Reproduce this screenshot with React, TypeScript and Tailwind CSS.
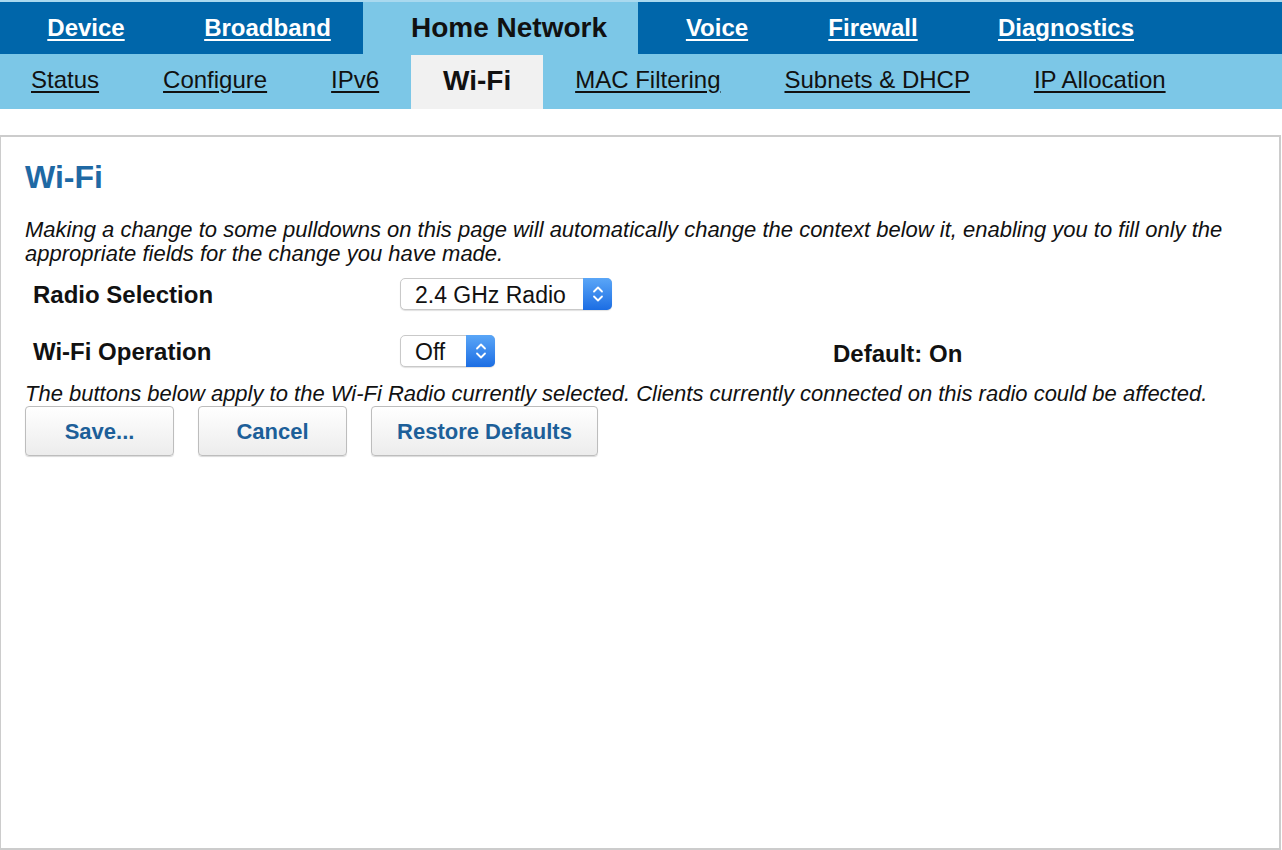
import React from "react";

const font = { fontFamily: '"Liberation Sans", Arial, Helvetica, sans-serif' };

function Chevrons() {
  return (
    <svg width="12" height="20" viewBox="0 0 12 20" fill="none" stroke="white" strokeWidth="1.8" strokeLinecap="round" strokeLinejoin="round">
      <path d="M2 7.5 L6 3.5 L10 7.5" />
      <path d="M2 12.5 L6 16.5 L10 12.5" />
    </svg>
  );
}

function Select({ value, width }: { value: string; width: string }) {
  return (
    <div className={`flex h-[32px] items-stretch rounded-[5px] border border-[#c9c9c9] bg-white shadow-[0_1px_1px_rgba(0,0,0,0.12)] ${width}`}>
      <div className="flex flex-1 items-center pl-[14px] pt-[2px] text-[23px] text-[#111]">{value}</div>
      <div className="-my-px -mr-px flex w-[29px] items-center justify-center rounded-r-[5px] bg-gradient-to-b from-[#5aa6f7] to-[#1b6de3]">
        <Chevrons />
      </div>
    </div>
  );
}

function Btn({ label, width }: { label: string; width: string }) {
  return (
    <button className={`h-[50px] ${width} rounded-[4px] border border-[#bdbdbd] bg-gradient-to-b from-white to-[#ececec] text-[22px] font-bold text-[#1d5f99] shadow-[0_1px_1px_rgba(0,0,0,0.15)]`}>
      {label}
    </button>
  );
}

export default function App() {
  const top = [
    { t: "Device", w: "w-[172px]" },
    { t: "Broadband", w: "w-[191px]" },
  ];
  const top2 = [
    { t: "Voice", w: "w-[158px]" },
    { t: "Firewall", w: "w-[154px]" },
    { t: "Diagnostics", w: "w-[232px]" },
  ];
  const sub1 = ["Status", "Configure", "IPv6"];
  const sub2 = ["MAC Filtering", "Subnets & DHCP", "IP Allocation"];
  return (
    <div className="h-[850px] w-[1282px] overflow-hidden bg-white" style={font}>
      <div className="h-[2px] bg-[#a9d9ef]" />
      <div className="flex h-[52px] bg-[#0066aa]">
        {top.map((i) => (
          <div key={i.t} className={`flex ${i.w} items-center justify-center`}>
            <a className="text-[24px] font-bold text-white underline decoration-[2px] underline-offset-[3px]">{i.t}</a>
          </div>
        ))}
        <div className="flex w-[275px] items-center bg-[#7cc7e7] pl-[48px] text-[28px] font-bold text-[#111]">Home Network</div>
        {top2.map((i) => (
          <div key={i.t} className={`flex ${i.w} items-center justify-center`}>
            <a className="text-[24px] font-bold text-white underline decoration-[2px] underline-offset-[3px]">{i.t}</a>
          </div>
        ))}
      </div>
      <div className="flex h-[55px] items-stretch bg-[#7cc7e7]">
        <div className="flex items-center pb-[4px]">
          {sub1.map((s, idx) => (
            <a key={s} className={`${idx === 0 ? "pl-[31px]" : "pl-[32px]"} pr-[32px] text-[24px] text-[#111] underline underline-offset-[3px]`}>{s}</a>
          ))}
        </div>
        <div className="mt-px flex w-[132px] items-center justify-center bg-[#f1f1f1] pb-[2px] text-[28px] font-bold text-[#111]">Wi-Fi</div>
        <div className="flex items-center pb-[4px]">
          {sub2.map((s) => (
            <a key={s} className="px-[32px] text-[24px] text-[#111] underline underline-offset-[3px]">{s}</a>
          ))}
        </div>
      </div>
      <div className="h-[26px]" />
      <div className="h-[716px] w-[1281px] border-l border-r-2 border-t-2 border-b-[3px] border-[#cccccc] pl-[24px] pt-[22px]">
        <h1 className="text-[32px] font-bold leading-[36px] text-[#1f69a4]">Wi-Fi</h1>
        <p className="mt-[23px] pr-[40px] text-[22px] italic leading-[24px] text-[#111]">
          Making a change to some pulldowns on this page will automatically change the context below it, enabling you to fill only the appropriate fields for the change you have made.
        </p>
        <div className="mt-[12px] flex h-[32px] items-center">
          <div className="w-[375px] pl-[8px] pt-[2px] text-[24px] font-bold text-[#111]">Radio Selection</div>
          <Select value="2.4 GHz Radio" width="w-[212px]" />
        </div>
        <div className="mt-[25px] flex h-[32px] items-center">
          <div className="w-[375px] pl-[8px] pt-[2px] text-[24px] font-bold text-[#111]">Wi-Fi Operation</div>
          <Select value="Off" width="w-[95px]" />
          <div className="ml-[338px] pt-[5px] text-[24px] font-bold text-[#111]">Default: On</div>
        </div>
        <p className="mt-[15px] text-[22px] italic leading-[24px] text-[#111]">
          The buttons below apply to the Wi-Fi Radio currently selected. Clients currently connected on this radio could be affected.
        </p>
        <div className="flex gap-[24px]">
          <Btn label="Save..." width="w-[149px]" />
          <Btn label="Cancel" width="w-[149px]" />
          <Btn label="Restore Defaults" width="w-[227px]" />
        </div>
      </div>
    </div>
  );
}
